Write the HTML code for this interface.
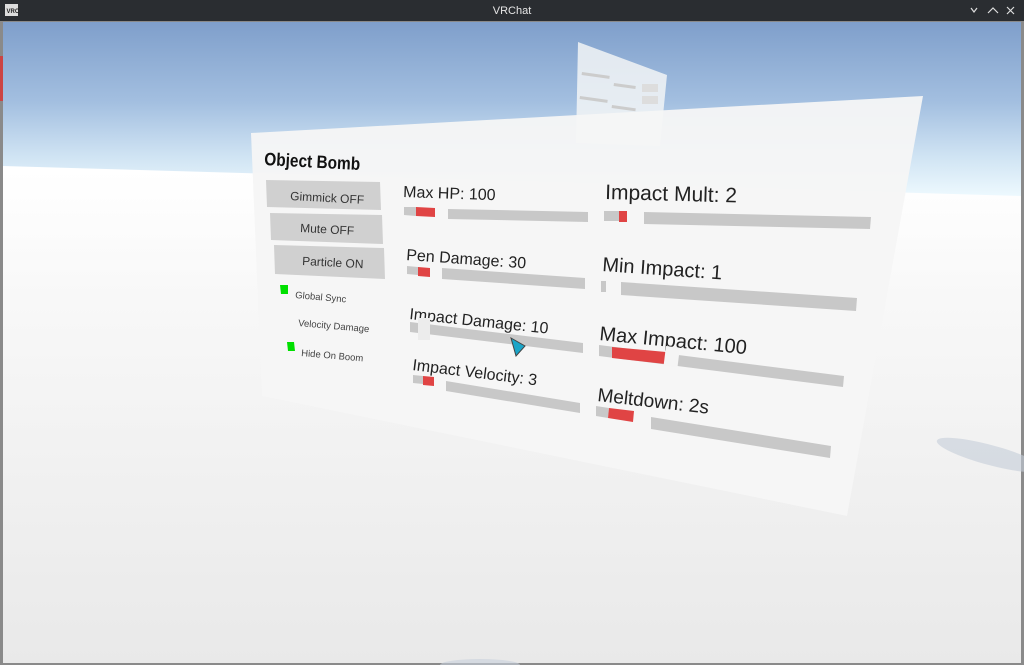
<!DOCTYPE html>
<html><head><meta charset="utf-8"><style>
html,body{margin:0;padding:0;width:1024px;height:665px;overflow:hidden;background:#2a2d31}
svg{display:block}
text{font-family:"Liberation Sans",sans-serif}
</style></head><body>
<svg width="1024" height="665" viewBox="0 0 1024 665">
<defs>
<linearGradient id="sky" gradientUnits="userSpaceOnUse" x1="0" y1="22" x2="0" y2="200">
<stop offset="0" stop-color="#7f9fcb"/><stop offset="0.45" stop-color="#a3bfe0"/><stop offset="0.75" stop-color="#cfe3f3"/><stop offset="1" stop-color="#f0fbff"/>
</linearGradient>
<linearGradient id="ground" gradientUnits="userSpaceOnUse" x1="0" y1="170" x2="0" y2="663">
<stop offset="0" stop-color="#ffffff"/><stop offset="0.3" stop-color="#f7f7f7"/><stop offset="1" stop-color="#e9e9e9"/>
</linearGradient>
</defs>
<rect x="0" y="0" width="1024" height="21" fill="#2a2d31"/>
<rect x="5" y="4" width="13" height="12" fill="#ddd"/>
<text x="6.5" y="13" font-size="6" fill="#222" font-weight="bold">VRC</text>
<text x="512" y="14" font-size="11" fill="#e6e6e6" text-anchor="middle">VRChat</text>
<path d="M971 8 L974 12 L977 8" stroke="#ddd" fill="none" stroke-width="1.2"/>
<path d="M988 13 L993 8 L998 13" stroke="#ddd" fill="none" stroke-width="1.2"/>
<path d="M1007 7 L1014 14 M1014 7 L1007 14" stroke="#ddd" stroke-width="1.2"/>
<rect x="0" y="21" width="1024" height="644" fill="#8a8a8a"/>
<rect x="3" y="22" width="1018" height="641" fill="url(#sky)"/>
<rect x="0" y="56" width="3" height="45" fill="#c44"/>
<polygon points="3,166 1021,196 1021,663 3,663" fill="url(#ground)"/>
<polygon points="578,42 667,75 660,146 576,143" fill="#f2f4f6" opacity="0.85"/>
<rect x="582" y="72" width="28" height="3" fill="#ccc" transform="rotate(8 582 72)"/>
<rect x="614" y="83" width="22" height="3" fill="#ccc" transform="rotate(8 614 83)"/>
<rect x="642" y="84" width="16" height="8" fill="#ddd"/>
<rect x="642" y="96" width="16" height="8" fill="#ddd"/>
<rect x="580" y="96" width="28" height="3" fill="#ccc" transform="rotate(8 580 96)"/>
<rect x="612" y="105" width="24" height="3" fill="#ccc" transform="rotate(8 612 105)"/>
<ellipse cx="990" cy="455" rx="55" ry="10" fill="#c5cdd8" opacity="0.6" transform="rotate(15 990 455)"/>
<polygon points="251,133 923,96 847,516 262,396" fill="#f5f5f5" opacity="0.95"/>
<text x="264" y="165" font-size="18" font-weight="bold" fill="#111" transform="rotate(3 264 165)" textLength="96" lengthAdjust="spacingAndGlyphs">Object Bomb</text>
<polygon points="266,180 380,182 381,210 267,207" fill="#d0d0d0"/>
<text x="290" y="200" font-size="12" fill="#333" transform="rotate(3 290 200)">Gimmick OFF</text>
<polygon points="270,213 382,215 383,244 271,240" fill="#d0d0d0"/>
<text x="300" y="232" font-size="12" fill="#333" transform="rotate(3 300 232)">Mute OFF</text>
<polygon points="274,245 384,248 385,279 275,274" fill="#d0d0d0"/>
<text x="302" y="265" font-size="12" fill="#333" transform="rotate(3 302 265)">Particle ON</text>
<polygon points="280,285 288,285 288,294 281,294" fill="#00e000"/>
<text x="295" y="298" font-size="9.5" fill="#444" transform="rotate(5 295 298)">Global Sync</text>
<text x="298" y="326" font-size="9.5" fill="#444" transform="rotate(5 298 326)">Velocity Damage</text>
<polygon points="287,342 294,342 295,351 288,351" fill="#00e000"/>
<text x="301" y="356" font-size="9.5" fill="#444" transform="rotate(5 301 356)">Hide On Boom</text>
<text x="403" y="197" font-size="16" fill="#222" transform="rotate(2 403 197)">Max HP: 100</text>
<polygon points="404,207 416,207 416,216 404,215" fill="#c8c8c8"/>
<polygon points="416,207 435,208 435,217 416,216" fill="#e04444"/>
<polygon points="448,209 588,212 588,222 448,219" fill="#c8c8c8"/>
<text x="406" y="260" font-size="16" fill="#222" transform="rotate(4 406 260)">Pen Damage: 30</text>
<polygon points="407,266 418,267 418,275 407,274" fill="#c8c8c8"/>
<polygon points="418,267 430,268 430,277 418,276" fill="#e04444"/>
<polygon points="442,268 585,278 585,289 442,279" fill="#c8c8c8"/>
<text x="409" y="319" font-size="16" fill="#222" transform="rotate(6 409 319)">Impact Damage: 10</text>
<polygon points="410,322 583,343 583,353 410,332" fill="#c8c8c8"/>
<rect x="418" y="318" width="12" height="22" fill="#ececec"/>
<polygon points="511,338 525,346 516,356" fill="#1ba5c8" stroke="#444" stroke-width="1"/>
<text x="412" y="370" font-size="16" fill="#222" transform="rotate(7 412 370)">Impact Velocity: 3</text>
<polygon points="413,375 423,376 423,384 413,383" fill="#c8c8c8"/>
<polygon points="423,376 434,377 434,386 423,385" fill="#e04444"/>
<polygon points="446,381 580,403 580,413 446,391" fill="#c8c8c8"/>
<text x="605" y="199" font-size="21" fill="#222" transform="rotate(1.5 605 199)">Impact Mult: 2</text>
<polygon points="604,211 619,211 619,221 604,221" fill="#c8c8c8"/>
<polygon points="619,211 627,211 627,222 619,222" fill="#e04444"/>
<polygon points="644,212 871,217 870,229 644,224" fill="#c8c8c8"/>
<text x="602" y="271" font-size="20" fill="#222" transform="rotate(4 602 271)">Min Impact: 1</text>
<polygon points="601,281 606,281 606,292 601,292" fill="#c8c8c8"/>
<polygon points="621,282 857,298 856,311 621,295" fill="#c8c8c8"/>
<text x="599" y="340" font-size="20" fill="#222" transform="rotate(5.5 599 340)">Max Impact: 100</text>
<polygon points="599,345 844,376 843,387 599,356" fill="#c8c8c8"/>
<polygon points="612,347 666,352 665,364 612,358" fill="#e04444"/>
<rect x="666" y="346" width="14" height="20" fill="#f5f5f5" transform="rotate(7 666 346)"/>
<text x="597" y="401" font-size="19" fill="#222" transform="rotate(6.5 597 401)">Meltdown: 2s</text>
<polygon points="596,406 609,408 608,418 596,416" fill="#c8c8c8"/>
<polygon points="609,408 634,411 633,422 608,418" fill="#e04444"/>
<polygon points="651,417 831,446 830,458 651,429" fill="#c8c8c8"/>
<ellipse cx="480" cy="665" rx="40" ry="6" fill="#c8d0dc" opacity="0.6"/>
</svg>
</body></html>
